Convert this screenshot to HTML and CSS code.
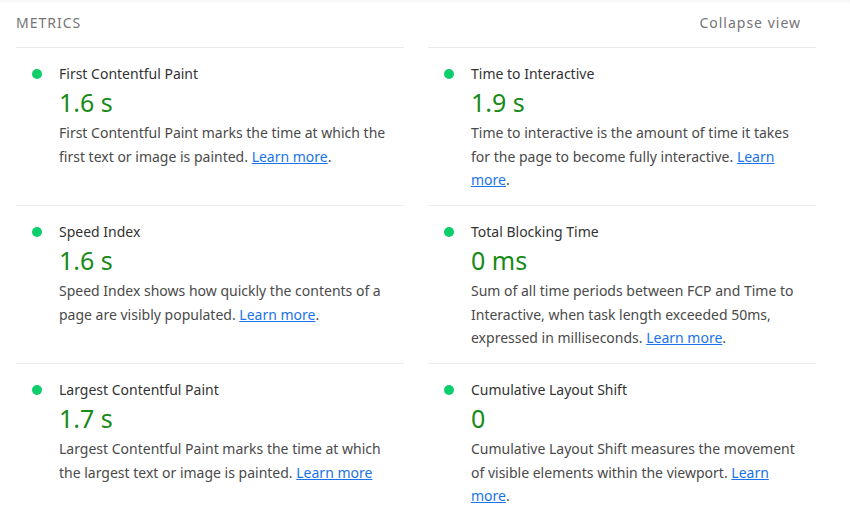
FILE: index.html
```html
<!DOCTYPE html>
<html>
<head>
<meta charset="utf-8">
<link rel="stylesheet" href="styles.css">
</head>
<body>
<div class="page">
  <div class="header">
    <span class="title">METRICS</span>
    <span class="toggle">Collapse view</span>
  </div>
  <div class="grid">
    <div class="metric">
      <div class="name"><span class="dot"></span>First Contentful Paint</div>
      <div class="value">1.6 s</div>
      <div class="desc">First Contentful Paint marks the time at which the first text or image is painted. <a href="#">Learn more</a>.</div>
    </div>
    <div class="metric">
      <div class="name"><span class="dot"></span>Time to Interactive</div>
      <div class="value">1.9 s</div>
      <div class="desc">Time to interactive is the amount of time it takes for the page to become fully interactive. <a href="#">Learn more</a>.</div>
    </div>
    <div class="metric">
      <div class="name"><span class="dot"></span>Speed Index</div>
      <div class="value">1.6 s</div>
      <div class="desc">Speed Index shows how quickly the contents of a page are visibly populated. <a href="#">Learn more</a>.</div>
    </div>
    <div class="metric">
      <div class="name"><span class="dot"></span>Total Blocking Time</div>
      <div class="value">0 ms</div>
      <div class="desc">Sum of all time periods between FCP and Time to Interactive, when task length exceeded 50ms, expressed in milliseconds. <a href="#">Learn more</a>.</div>
    </div>
    <div class="metric">
      <div class="name"><span class="dot"></span>Largest Contentful Paint</div>
      <div class="value">1.7 s</div>
      <div class="desc">Largest Contentful Paint marks the time at which the largest text or image is painted. <a href="#">Learn more</a></div>
    </div>
    <div class="metric">
      <div class="name"><span class="dot"></span>Cumulative Layout Shift</div>
      <div class="value">0</div>
      <div class="desc">Cumulative Layout Shift measures the movement of visible elements within the viewport. <a href="#">Learn more</a>.</div>
    </div>
  </div>
</div>
</body>
</html>
```
FILE: styles.css
```css
html, body {
  margin: 0;
  padding: 0;
  background: #fff;
}
body {
  font-family: "Noto Sans", "Open Sans", sans-serif;
  color: #424242;
  overflow: hidden;
  height: 525px;
  box-shadow: inset 0 4px 4px -3px rgba(0,0,0,0.06);
}
.page {
  width: 800px;
  padding-left: 16px;
}
.header {
  height: 47px;
  display: flex;
  align-items: center;
  justify-content: space-between;
  padding-right: 15px;
  padding-bottom: 3px;
  box-sizing: border-box;
}
.title {
  font-size: 14px;
  letter-spacing: 1px;
  color: #757575;
}
.toggle {
  font-size: 14px;
  letter-spacing: 1px;
  color: #757575;
}
.grid {
  display: grid;
  grid-template-columns: 388px 388px;
  column-gap: 24px;
  grid-auto-rows: 158px;
}
.metric {
  border-top: 1px solid #ebebeb;
  padding: 16px 0 0 43px;
  box-sizing: border-box;
  position: relative;
}
.name {
  font-size: 14px;
  line-height: 20px;
  color: #333;
  position: relative;
}
.dot {
  position: absolute;
  left: -27px;
  top: 5px;
  width: 10px;
  height: 10px;
  border-radius: 50%;
  background: #0cce6b;
}
.value {
  font-size: 25px;
  line-height: 36px;
  color: #178a17;
}
.desc {
  font-size: 14px;
  line-height: 23.5px;
  color: #4a4a4a;
  margin-top: 1px;
  padding-right: 8px;
}
.desc a {
  color: #1a73e8;
  text-decoration: underline;
}
```
